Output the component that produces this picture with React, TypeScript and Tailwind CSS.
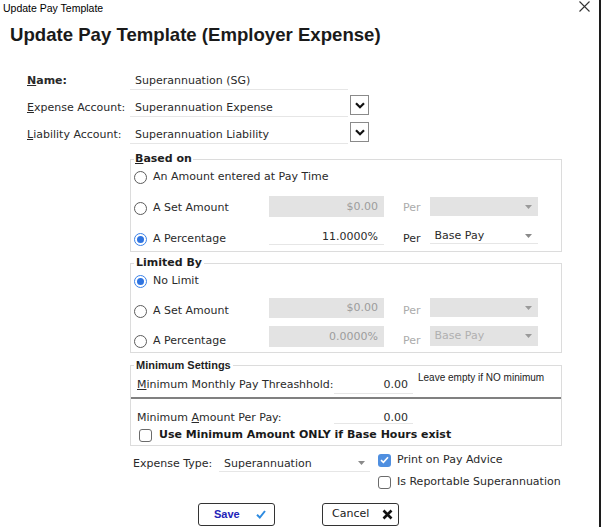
import React from "react";

function Radio({ checked }: { checked?: boolean }) {
  return (
    <span
      className={
        checked
          ? "w-[13px] h-[13px] rounded-full border border-[#3b82e8] bg-white flex items-center justify-center shrink-0"
          : "w-[13px] h-[13px] rounded-full border border-[#5c5c5c] bg-white flex items-center justify-center shrink-0"
      }
    >
      {checked && <span className="w-[7px] h-[7px] rounded-full bg-[#2f74e0]" />}
    </span>
  );
}

function Check({ checked }: { checked?: boolean }) {
  return checked ? (
    <span className="w-[13px] h-[13px] rounded-[3px] bg-[#4f8fe0] flex items-center justify-center shrink-0">
      <svg width="9" height="8" viewBox="0 0 9 8">
        <path d="M1 4.2 L3.4 6.4 L8 1.2" stroke="#fff" strokeWidth="1.6" fill="none" />
      </svg>
    </span>
  ) : (
    <span className="w-[13px] h-[13px] rounded-[3px] border border-[#6b6b6b] bg-white shrink-0" />
  );
}

function Tri({ color = "#8a8a8a" }: { color?: string }) {
  return (
    <svg width="7" height="4" viewBox="0 0 7 4">
      <polygon points="0,0 7,0 3.5,4" fill={color} />
    </svg>
  );
}

function ChevBtn() {
  return (
    <div className="w-[19px] h-[20px] border border-[#8a8a8a] bg-white flex items-center justify-center">
      <svg width="10" height="7" viewBox="0 0 10 7">
        <path d="M1 1.3 L5 5.3 L9 1.3" stroke="#111" strokeWidth="2.2" fill="none" />
      </svg>
    </div>
  );
}

export default function App() {
  return (
    <div className="w-[602px] h-[527px] bg-white flex overflow-hidden text-[11px] text-[#2a2a2a] [font-family:'DejaVu_Sans',sans-serif]">
      <div className="w-[599px] h-full flex flex-col">
        {/* title bar */}
        <div className="h-[18px] flex items-center justify-between pl-[3px] pr-[9px]">
          <span className="text-[10.5px] text-black [font-family:'Liberation_Sans',sans-serif]">Update Pay Template</span>
          <svg width="11" height="11" viewBox="0 0 11 11" className="-mt-[5px]">
            <path d="M0.5 0.5 L10.5 10.5 M10.5 0.5 L0.5 10.5" stroke="#333" strokeWidth="1.1" />
          </svg>
        </div>
        {/* heading */}
        <div className="h-[48px] pt-[2px] pl-[10px]">
          <div className="leading-[30px] text-[18.6px] font-bold text-[#1a1a1a] [font-family:'Liberation_Sans',sans-serif]">
            Update Pay Template (Employer Expense)
          </div>
        </div>

        {/* top rows */}
        <div className="h-[27px] flex items-start pl-[27px]">
          <span className="w-[103px] mt-[3px] pt-[3px] leading-[17px] font-bold">
            <span className="underline">N</span>ame:
          </span>
          <div className="w-[218px] h-[21px] mt-[3px] border-b border-[#e6e6e6] pl-[5px] pt-[3px] leading-[17px]">Superannuation (SG)</div>
        </div>
        <div className="h-[27px] flex items-start pl-[27px]">
          <span className="w-[103px] mt-[3px] pt-[3px] leading-[17px]">
            <span className="underline">E</span>xpense Account:
          </span>
          <div className="w-[218px] h-[21px] mt-[3px] border-b border-[#e6e6e6] pl-[5px] pt-[3px] leading-[17px]">Superannuation Expense</div>
          <div className="ml-[2px] mt-[2px]">
            <ChevBtn />
          </div>
        </div>
        <div className="h-[27px] flex items-start pl-[27px]">
          <span className="w-[103px] mt-[3px] pt-[3px] leading-[17px]">
            <span className="underline">L</span>iability Account:
          </span>
          <div className="w-[218px] h-[21px] mt-[3px] border-b border-[#e6e6e6] pl-[5px] pt-[3px] leading-[17px]">Superannuation Liability</div>
          <div className="ml-[2px] mt-[2px]">
            <ChevBtn />
          </div>
        </div>

        {/* Based on */}
        <fieldset className="ml-[130px] mt-[5px] w-[432px] border border-[#dcdcdc] pl-[3px] pb-[1px]">
          <legend className="px-[1px] leading-[14px] font-bold text-[#1e1e1e]">
            <span className="underline">B</span>ased on
          </legend>
          <div className="h-[22px] flex items-center">
            <Radio />
            <span className="ml-[6px] leading-[22px]">An Amount entered at Pay Time</span>
          </div>
          <div className="h-[22px] mt-[9px] flex items-start">
            <div className="w-[135px] h-full flex items-center">
              <Radio />
              <span className="ml-[6px] leading-[22px]">A Set Amount</span>
            </div>
            <div className="w-[115px] h-[21px] -mt-[1px] bg-[#e3e3e3] text-right pr-[6px] leading-[22px] text-[#9c9c9c]">$0.00</div>
            <span className="ml-[19px] leading-[22px] text-[#ababab]">Per</span>
            <div className="ml-[9px] w-[108px] h-[19px] bg-[#e3e3e3] flex items-center justify-end pr-[6px]">
              <Tri color="#9a9a9a" />
            </div>
          </div>
          <div className="h-[22px] mt-[9px] flex items-start">
            <div className="w-[135px] h-full flex items-center">
              <Radio checked />
              <span className="ml-[6px] leading-[22px]">A Percentage</span>
            </div>
            <div className="w-[115px] h-[17px] border-b border-[#e6e6e6] text-right pr-[6px] leading-[17px]">11.0000%</div>
            <span className="ml-[19px] leading-[22px]">Per</span>
            <div className="ml-[9px] w-[108px] h-[16px] border-b border-[#e6e6e6] flex items-center justify-between pl-[5px] pr-[6px]">
              <span className="leading-[16px]">Base Pay</span>
              <Tri />
            </div>
          </div>
        </fieldset>

        {/* Limited By */}
        <fieldset className="ml-[130px] mt-[4px] w-[432px] border border-[#dcdcdc] pl-[3px] pb-[0px]">
          <legend className="px-[2px] leading-[14px] font-bold text-[#1e1e1e]">Limited By</legend>
          <div className="h-[22px] flex items-center">
            <Radio checked />
            <span className="ml-[6px] leading-[22px]">No Limit</span>
          </div>
          <div className="h-[22px] mt-[8px] flex items-start">
            <div className="w-[135px] h-full flex items-center">
              <Radio />
              <span className="ml-[6px] leading-[22px]">A Set Amount</span>
            </div>
            <div className="w-[115px] h-[20px] -mt-[2px] bg-[#e3e3e3] text-right pr-[6px] leading-[20px] text-[#9c9c9c]">$0.00</div>
            <span className="ml-[19px] leading-[22px] text-[#ababab]">Per</span>
            <div className="ml-[9px] -mt-[2px] w-[108px] h-[19px] bg-[#e3e3e3] flex items-center justify-end pr-[6px]">
              <Tri color="#9a9a9a" />
            </div>
          </div>
          <div className="h-[22px] mt-[8px] flex items-start">
            <div className="w-[135px] h-full flex items-center">
              <Radio />
              <span className="ml-[6px] leading-[22px]">A Percentage</span>
            </div>
            <div className="w-[115px] h-[21px] -mt-[4px] bg-[#e3e3e3] text-right pr-[6px] leading-[21px] text-[#9c9c9c]">0.0000%</div>
            <span className="ml-[19px] leading-[22px] text-[#ababab]">Per</span>
            <div className="ml-[9px] -mt-[4px] w-[108px] h-[20px] bg-[#e3e3e3] flex items-center justify-between pl-[5px] pr-[6px]">
              <span className="text-[#b0b0b0]">Base Pay</span>
              <Tri color="#9a9a9a" />
            </div>
          </div>
        </fieldset>

        {/* Minimum Settings */}
        <fieldset className="ml-[130px] mt-[5px] w-[432px] border border-[#dcdcdc] pl-[3px] pb-[2px]">
          <legend className="px-[2px] leading-[14px] font-bold text-[11px] text-[#1e1e1e] [font-family:'Liberation_Sans',sans-serif]">
            Minimum Settings
          </legend>
          <div className="h-[24px] flex items-start pl-[3px]">
            <span className="w-[197px] pt-[1px] leading-[24px]">
              <span className="underline">M</span>inimum Monthly Pay Threashhold:
            </span>
            <div className="w-[79px] h-[22px] border-b border-[#e6e6e6] text-right pr-[5px] pt-[1px] leading-[23px]">0.00</div>
            <span className="ml-[5px] text-[10px] leading-[12px] text-[#222] [font-family:'Liberation_Sans',sans-serif]">
              Leave empty if NO minimum
            </span>
          </div>
          <div className="-ml-[3px] mt-[1px] h-[2px] bg-[#808080]" />
          <div className="h-[22px] mt-[6px] flex items-start pl-[3px]">
            <span className="w-[197px] pt-[2px] leading-[22px]">
              Minimum <span className="underline">A</span>mount Per Pay:
            </span>
            <div className="w-[79px] h-[19px] border-b border-[#e6e6e6] text-right pr-[5px] pt-[2px] leading-[21px]">0.00</div>
          </div>
          <div className="h-[16px] flex items-center pl-[5px]">
            <Check />
            <span className="ml-[7px] font-bold text-[#1a1a1a] leading-[16px]">Use Minimum Amount ONLY if Base Hours exist</span>
          </div>
        </fieldset>

        {/* bottom */}
        <div className="mt-[6px] ml-[133px] flex items-start">
          <span className="w-[86px] mt-[2px] pt-[1px] leading-[18px]">Expense Type:</span>
          <div className="w-[151px] h-[18px] mt-[2px] border-b border-[#e6e6e6] flex items-center justify-between pl-[5px] pr-[5px]">
            <span className="pt-[1px] leading-[17px]">Superannuation</span>
            <Tri />
          </div>
          <div className="ml-[8px] flex flex-col">
            <div className="h-[16px] flex items-center">
              <Check checked />
              <span className="ml-[6px] leading-[16px]">Print on Pay Advice</span>
            </div>
            <div className="h-[16px] mt-[6px] flex items-center">
              <Check />
              <span className="ml-[6px] leading-[16px]">Is Reportable Superannuation</span>
            </div>
          </div>
        </div>

        {/* buttons */}
        <div className="mt-[13px] ml-[198px] flex">
          <div className="w-[77px] h-[23px] border border-[#333] rounded-[3px] flex items-center pl-[15px] pr-[8px] justify-between">
            <span className="font-bold text-[11px] text-[#2323b8] [font-family:'Liberation_Sans',sans-serif]">Save</span>
            <svg width="10" height="9" viewBox="0 0 10 9">
              <path d="M1 4.8 L3.8 7.5 L9 1" stroke="#2e8be0" strokeWidth="2" fill="none" />
            </svg>
          </div>
          <div className="ml-[47px] w-[77px] h-[23px] border border-[#333] rounded-[3px] flex items-center pl-[9px] pr-[5px] justify-between">
            <span className="text-[#1a1a1a]">Cancel</span>
            <svg width="11" height="11" viewBox="0 0 11 11">
              <path d="M1.5 1.5 L9.5 9.5 M9.5 1.5 L1.5 9.5" stroke="#111" strokeWidth="2.6" />
            </svg>
          </div>
        </div>
      </div>
      <div className="w-[2px] h-full bg-[#1c1c1c]" />
      <div className="w-[1px] h-full bg-white" />
    </div>
  );
}
